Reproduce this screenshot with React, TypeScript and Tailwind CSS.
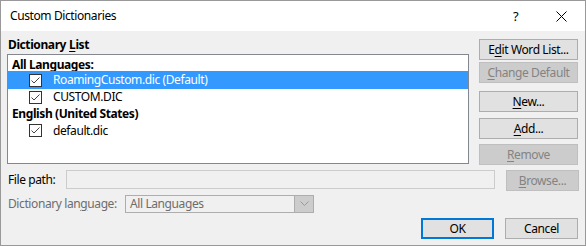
import React from "react";

const U = ({ children }: { children: React.ReactNode }) => (
  <span className="underline decoration-1 underline-offset-[2px]">{children}</span>
);

const Check = () => (
  <span className="w-[13px] h-[13px] border border-[#333333] bg-white flex items-center justify-center shrink-0">
    <svg width="11" height="11" viewBox="0 0 11 11">
      <polyline points="1.5,5.5 4,8 9.5,2.5" fill="none" stroke="#444" strokeWidth="1" />
    </svg>
  </span>
);

const Btn = ({
  children,
  disabled,
  className = "",
}: {
  children: React.ReactNode;
  disabled?: boolean;
  className?: string;
}) => (
  <div
    className={
      "h-[21px] flex items-center justify-center border " +
      (disabled
        ? "bg-[#cccccc] border-[#bfbfbf] text-[#838383] "
        : "bg-[#e1e1e1] border-[#adadad] text-black ") +
      className
    }
  >
    {children}
  </div>
);

export default function App() {
  return (
    <div className="w-[586px] h-[246px] border border-[#999999] bg-[#f0f0f0] flex flex-col font-['Noto_Sans',sans-serif] text-[12px] tracking-[-0.4px] leading-none text-black overflow-hidden">
      {/* Title bar */}
      <div className="h-[30px] bg-white flex items-center pl-[9px] shrink-0">
        <span className="text-[12px]">Custom Dictionaries</span>
        <div className="ml-auto flex items-center pr-[1px]">
          <span className="w-[46px] text-center text-[13px] pl-[1px]">?</span>
          <span className="w-[46px] flex justify-center">
            <svg width="11" height="11" viewBox="0 0 11 11">
              <path d="M0.5 0.5 L10.5 10.5 M10.5 0.5 L0.5 10.5" stroke="#000" strokeWidth="1" />
            </svg>
          </span>
        </div>
      </div>

      {/* Body */}
      <div className="flex-1 flex flex-col pl-[6px] pt-[5px]">
        {/* Top section */}
        <div className="flex">
          <div className="w-[462px] flex flex-col">
            <div className="h-[18px] flex items-center pl-[1px] font-bold">
              Dictionary <span className="ml-[3px]"><U>L</U>ist</span>
            </div>
            <div className="h-[110px] border border-[#828790] bg-white flex flex-col">
              <div className="h-[16px] flex items-end pl-[4px] font-bold">All Languages:</div>
              <div className="h-[18px] flex items-center bg-[#3399ff] text-white">
                <span className="ml-[21px]"><Check /></span>
                <span className="ml-[11px]">RoamingCustom.dic (Default)</span>
              </div>
              <div className="h-[16px] flex items-center">
                <span className="ml-[21px]"><Check /></span>
                <span className="ml-[11px]">CUSTOM.DIC</span>
              </div>
              <div className="h-[17px] flex items-center pl-[4px] font-bold">English (United States)</div>
              <div className="h-[17px] flex items-center">
                <span className="ml-[21px]"><Check /></span>
                <span className="ml-[11px]">default.dic</span>
              </div>
            </div>
          </div>
          <div className="w-[99px] ml-[10px] flex flex-col pt-[3px]">
            <Btn>E<U>d</U>it Word List...</Btn>
            <Btn disabled className="mt-[2px]"><U>C</U>hange Default</Btn>
            <Btn className="mt-[8px]"><U>N</U>ew...</Btn>
            <Btn className="mt-[6px]"><U>A</U>dd...</Btn>
            <Btn disabled className="mt-[5px]"><U>R</U>emove</Btn>
          </div>
        </div>

        {/* File path row */}
        <div className="flex items-start mt-[5px]">
          <div className="w-[59px] h-[19px] flex items-center pl-[1px]">File path:</div>
          <div className="w-[429px] h-[19px] border border-[#cccccc] bg-[#f0f0f0]" />
          <Btn disabled className="w-[73px] ml-[11px]"><U>B</U>rowse...</Btn>
        </div>

        {/* Dictionary language row */}
        <div className="flex items-center mt-[4px] text-[#6d6d6d]">
          <div className="w-[118px] h-[18px] flex items-center pl-[1px]">
            Dictionary lan<U>g</U>uage:
          </div>
          <div className="w-[189px] h-[18px] border border-[#adadad] bg-[#f0f0f0] flex items-center">
            <span className="pl-[4px] flex-1">All Languages</span>
            <span className="w-[19px] h-[16px] bg-[#cccccc] border-l border-[#adadad] flex items-center justify-center">
              <svg width="9" height="6" viewBox="0 0 9 6">
                <polyline points="0.5,0.5 4.5,4.5 8.5,0.5" fill="none" stroke="#9a9a9a" strokeWidth="1" />
              </svg>
            </span>
          </div>
        </div>

        {/* OK / Cancel */}
        <div className="flex justify-end mt-[5px] pr-[7px]">
          <div className="w-[73px] h-[21px] border-2 border-[#0078d7] bg-[#e1e1e1] flex items-center justify-center">
            OK
          </div>
          <Btn className="w-[73px] ml-[11px]">Cancel</Btn>
        </div>
      </div>
    </div>
  );
}
